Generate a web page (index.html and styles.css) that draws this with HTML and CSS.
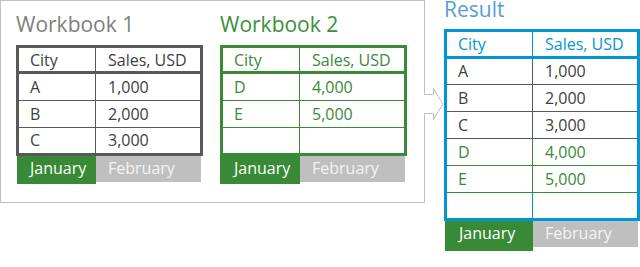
FILE: index.html
```html
<!DOCTYPE html>
<html>
<head>
<meta charset="utf-8">
<link rel="stylesheet" href="styles.css">
</head>
<body>
<div class="page">
  <div class="source">
    <div class="wb">
      <div class="title t-gray">Workbook 1</div>
      <div class="sheet f-gray">
        <div class="row head"><div class="c1">City</div><div class="c2">Sales, USD</div></div>
        <div class="row r-gray"><div class="c1">A</div><div class="c2">1,000</div></div>
        <div class="row r-gray"><div class="c1">B</div><div class="c2">2,000</div></div>
        <div class="row r-gray"><div class="c1">C</div><div class="c2">3,000</div></div>
      </div>
      <div class="tabs"><div class="tab jan inset">January</div><div class="tab feb">February</div></div>
    </div>
    <div class="wb">
      <div class="title t-green">Workbook 2</div>
      <div class="sheet f-green">
        <div class="row head"><div class="c1">City</div><div class="c2">Sales, USD</div></div>
        <div class="row r-green"><div class="c1">D</div><div class="c2">4,000</div></div>
        <div class="row r-green"><div class="c1">E</div><div class="c2">5,000</div></div>
        <div class="row r-green"><div class="c1"></div><div class="c2"></div></div>
      </div>
      <div class="tabs"><div class="tab jan">January</div><div class="tab feb">February</div></div>
    </div>
    <svg class="arrow" width="26" height="46" viewBox="0 0 26 46">
      <path d="M3.5 14.5 H13.5 V8.5 L23 24 L13.5 39.5 V33.5 H3.5 Z" fill="#fff"/>
      <path d="M4.5 14.5 H13.5 V8.5 L23 24 L13.5 39.5 V33.5 H4.5" fill="none" stroke="#bfbfbf" stroke-width="1"/>
    </svg>
  </div>
  <div class="result">
    <div class="title t-blue rtitle">Result</div>
    <div class="sheet f-blue wide">
      <div class="row head"><div class="c1">City</div><div class="c2">Sales, USD</div></div>
      <div class="row r-gray first"><div class="c1">A</div><div class="c2">1,000</div></div>
      <div class="row r-gray"><div class="c1">B</div><div class="c2">2,000</div></div>
      <div class="row r-gray"><div class="c1">C</div><div class="c2">3,000</div></div>
      <div class="row r-green"><div class="c1">D</div><div class="c2">4,000</div></div>
      <div class="row r-green"><div class="c1">E</div><div class="c2">5,000</div></div>
      <div class="row r-blue"><div class="c1"></div><div class="c2"></div></div>
    </div>
    <div class="tabs"><div class="tab jan inset tall">January</div><div class="tab feb">February</div></div>
  </div>
</div>
</body>
</html>
```
FILE: styles.css
```css
* { box-sizing: border-box; }
html, body { margin: 0; padding: 0; background: #fff; }
body { font-family: "Open Sans", "Noto Sans", sans-serif; font-size: 16px; color: #404040; }

.page { display: flex; align-items: flex-start; width: 640px; height: 267px; }

.source {
  position: relative;
  display: flex;
  gap: 17px;
  width: 425px;
  height: 203px;
  border: 1px solid #bfbfbf;
  padding: 9px 0 0 15px;
}

.wb { width: 187px; display: flex; flex-direction: column; }

.title { font-size: 21px; line-height: 28px; height: 28px; margin-bottom: 7px; white-space: nowrap; }
.t-gray { color: #7f7f7f; }
.t-green { color: #3d8f3a; }
.t-blue { color: #5b9bd5; }
.rtitle { line-height: 18px; height: 18px; margin-bottom: 11px; }

.result { margin-left: 19px; width: 196px; display: flex; flex-direction: column; }

.sheet { border: 3px solid var(--frame); width: 187px; }
.sheet.wide { width: 196px; }
.f-gray { --frame: #595959; }
.f-green { --frame: #388a36; color: #388a36; }
.f-blue { --frame: #0096d6; }

.row { display: flex; height: 27px; line-height: 26px; border-bottom: 1px solid var(--line); color: var(--txt); }
.row:last-child { border-bottom: none; height: 25px; line-height: 25px; }
.row.first { height: 26px; line-height: 25px; }

.r-gray { --line: #595959; --div: #595959; --txt: #404040; }
.r-green { --line: #388a36; --div: #388a36; --txt: #388a36; }
.r-blue { --line: #0096d6; --div: #0096d6; --txt: #404040; }

.head {
  height: 26px;
  line-height: 24px;
  padding-top: 0;
  border-bottom: 3px solid var(--frame);
  --div: var(--frame);
  --txt: inherit;
}
.f-gray .head { color: #404040; }
.f-green .head { color: #388a36; }
.f-blue .head { color: #0096d6; height: 27px; line-height: 25px; }

.c1 { width: 77px; flex: none; border-right: 1px solid var(--div); padding-left: 11px; white-space: nowrap; }
.c2 { flex: 1; padding-left: 12px; white-space: nowrap; }
.wide .c1 { width: 86px; }

.tabs { display: flex; align-items: flex-start; }
.tab { height: 26px; line-height: 24px; font-size: 16px; white-space: nowrap; }
.jan { background: #388a36; color: #fff; width: 80px; height: 28px; padding-left: 14px; }
.jan.inset { margin-left: 1px; width: 79px; padding-left: 13px; }
.jan.tall { width: 88px; height: 30px; line-height: 25px; padding-left: 14px; }
.feb { background: #bfbfbf; color: #f4f4f4; width: 105px; padding-left: 12px; }

.arrow { position: absolute; left: 419px; top: 79px; }
```
